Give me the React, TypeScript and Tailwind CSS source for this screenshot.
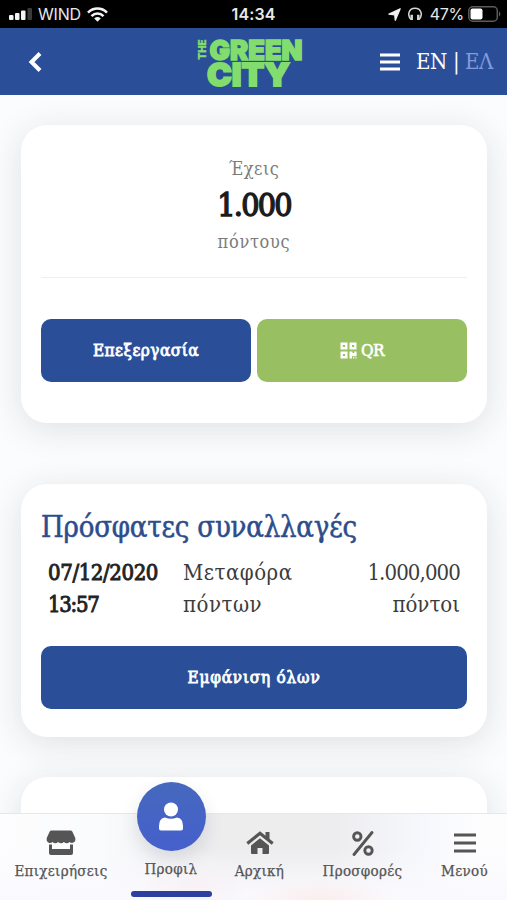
import type { ReactNode } from "react"

function StatusBar() {
  return (
    <div className="flex h-7 shrink-0 items-center bg-black font-['Inter',sans-serif] text-[#e8e8e8]">
      <div className="flex flex-1 items-center pl-[9px]">
        <svg width="23" height="12" viewBox="0 0 23 12" fill="#f4f4f4">
          <rect x="0" y="7" width="4.5" height="5" rx="1" />
          <rect x="6" y="5" width="4.5" height="7" rx="1" />
          <rect x="12" y="2.500" width="4.500" height="9.500" rx="1" />
          <rect x="18.500" y="0" width="4.500" height="12" rx="1" fill="#3a3a3a" />
        </svg>
        <span className="ml-[6px] text-[16px] tracking-[-0.2px]">WIND</span>
        <svg className="ml-[6px]" width="21" height="15" viewBox="0 0 21 15" fill="none" stroke="#f4f4f4" strokeWidth="2.6">
          <path d="M1 5.600C6.400.2 14.600.2 20 5.600" />
          <path d="M4.500 9.100C8 5.700 13 5.700 16.500 9.100" />
          <path d="M7.200 11.400C9.200 9.500 11.800 9.500 13.800 11.400L10.500 14.800Z" fill="#f4f4f4" stroke="none" />
        </svg>
      </div>
      <span className="mr-[3px] text-[16px] font-semibold tracking-[0.1px]">14:34</span>
      <div className="flex flex-1 items-center justify-end pr-[6px]">
        <svg width="13" height="13" viewBox="0 0 13 13" fill="#f0f0f0" stroke="#f0f0f0" strokeWidth="1.300" strokeLinejoin="round">
          <path d="M12.200.8L1 6.200l5.700.6.600 5.500z" />
        </svg>
        <svg className="ml-[7px]" width="14" height="14" viewBox="0 0 14 14" fill="none" stroke="#d5d5d5">
          <path d="M3 12.500C-1.200 8 .8 1.200 7 1.200S15.200 8 11 12.500" strokeWidth="1.500" />
          <path d="M3.700 7.700v5.300M10.300 7.700v5.300" strokeWidth="2.500" />
        </svg>
        <span className="ml-[8px] text-[16px] tracking-[-0.3px]">47%</span>
        <svg className="ml-[4px]" width="33" height="16" viewBox="0 0 33 16">
          <rect x="0.800" y="0.800" width="28.500" height="14.400" rx="4" fill="none" stroke="#5c5c5c" strokeWidth="1.500" />
          <rect x="2.500" y="2.500" width="12" height="11" rx="2" fill="#fff" />
          <path d="M31 5.500c1.800.8 1.800 4.200 0 5z" fill="#5c5c5c" />
        </svg>
      </div>
    </div>
  )
}

function Logo() {
  return (
    <svg
      width="108"
      height="54"
      viewBox="0 0 108 54"
      fill="#82dd6e"
      stroke="#82dd6e"
      className="overflow-visible font-['Inter',sans-serif] font-black"
    >
      <text transform="translate(8.500 23.500) rotate(-90)" fontSize="10" strokeWidth="0.3" textLength="20" lengthAdjust="spacingAndGlyphs">THE</text>
      <text x="12.500" y="23.500" fontSize="27.500" strokeWidth="1.500" textLength="93" lengthAdjust="spacingAndGlyphs">GREEN</text>
      <text x="10" y="50.200" fontSize="31" strokeWidth="1.800" textLength="83" lengthAdjust="spacingAndGlyphs">CITY</text>
    </svg>
  )
}

function Header() {
  return (
    <header className="relative flex h-[67px] shrink-0 items-center justify-between bg-[#2a4f98] pl-[28px] pr-[14px] text-white">
      <svg width="14" height="20" viewBox="0 0 14 20" fill="none" stroke="#fff" strokeWidth="4">
        <path d="M12 1.500L3.500 10l8.500 8.500" />
      </svg>
      <div className="absolute left-[197px] top-[8px]">
        <Logo />
      </div>
      <div className="flex items-center">
        <svg width="20" height="18" viewBox="0 0 20 18" fill="#fff">
          <path d="M0 .5h20v3H0zM0 7.500h20v3H0zM0 14.500h20v3H0z" />
        </svg>
        <div className="ml-[16px] text-[22px] tracking-[-0.4px] whitespace-nowrap">
          EN | <span className="text-[#8499dc]">ΕΛ</span>
        </div>
      </div>
    </header>
  )
}

function Card({ className, children }: { className: string; children?: ReactNode }) {
  return (
    <section className={`shrink-0 rounded-[26px] bg-white px-5 shadow-[0_6px_34px_rgba(35,50,45,0.13)] ${className}`}>
      {children}
    </section>
  )
}

function QrIcon() {
  return (
    <svg width="17" height="17" viewBox="0 0 17 17" fill="none" stroke="#fff" strokeWidth="2.400">
      <path d="M1.700 1.700h4.600v4.600H1.700zM10.700 1.700h4.600v4.600h-4.600zM1.700 10.700h4.600v4.600H1.700z" />
      <path d="M9.500 9.500h3v1.500h1.800V9.500h2.300v4.800h-4.600v2.300H9.500z" fill="#fff" stroke="none" />
      <path d="M13 15.800h1.300M15.400 15.800h1.200" strokeWidth="1.300" />
    </svg>
  )
}

function PointsCard() {
  return (
    <Card className="h-[298px] pt-[28px] text-center">
      <div className="h-[31px] text-[18px] leading-[31px] tracking-[0.5px] text-[#7b7b7b]">Έχεις</div>
      <div className="h-[42px] text-[32px] leading-[42px] tracking-[-1.8px] text-[#1c1c1c] [-webkit-text-stroke:1.4px_#1c1c1c]">
        1.000
      </div>
      <div className="h-[31px] text-[18px] leading-[31px] tracking-[0.7px] text-[#7b7b7b]">πόντους</div>
      <div className="mt-[20px] border-t border-[#efefef]" />
      <div className="mt-[41px] flex gap-[6px] text-white">
        <button className="h-[63px] flex-1 rounded-[10px] bg-[#2a4f98] text-[17px] tracking-[0.5px] [-webkit-text-stroke:0.8px_white]">
          Επεξεργασία
        </button>
        <button className="flex h-[63px] flex-1 items-center justify-center gap-[4px] rounded-[10px] bg-[#98bf62] text-[17px] tracking-[-0.5px]">
          <QrIcon />
          <span className="[-webkit-text-stroke:0.6px_white]">QR</span>
        </button>
      </div>
    </Card>
  )
}

function TransactionsCard() {
  return (
    <Card className="mt-[61px] h-[253px] pt-[23px]">
      <h2 className="h-[40px] whitespace-nowrap text-[29px] leading-[40px] tracking-[-0.2px] text-[#2d4c8c] [-webkit-text-stroke:0.5px_#2d4c8c]">
        Πρόσφατες συναλλαγές
      </h2>
      <div className="mt-[10px] flex px-[7px] text-[22px] leading-8 text-[#3c3c3c]">
        <div className="w-[135px] tracking-[-0.4px] text-[#222] [-webkit-text-stroke:0.9px_#222]">
          <div>07/12/2020</div>
          <div className="tracking-[-1.3px]">13:57</div>
        </div>
        <div className="flex-1 tracking-[0.5px]">
          <div>Μεταφόρα</div>
          <div>πόντων</div>
        </div>
        <div className="text-right">
          <div className="tracking-[-0.9px]">1.000,000</div>
          <div>πόντοι</div>
        </div>
      </div>
      <button className="mt-[25px] block h-[63px] w-full rounded-[10px] bg-[#2a4f98] text-[17px] tracking-[0.8px] text-white [-webkit-text-stroke:0.8px_white]">
        Εμφάνιση όλων
      </button>
    </Card>
  )
}

function StoreIcon() {
  return (
    <svg width="30" height="26" viewBox="0 0 30 26" fill="currentColor">
      <path d="M5.500.5h19q1.200 0 1.800 1l3 6.500v2.500a3.500 3.500 0 0 1-5.700 1.500 4.200 4.200 0 0 1-5.700 0 4.200 4.200 0 0 1-5.700 0 4.200 4.200 0 0 1-5.700 0A3.500 3.500 0 0 1 .7 10.500V8l3-6.500q.6-1 1.800-1z" />
      <path d="M3 14.500h3V19h18v-4.500h3V23q0 2-2 2H5q-2 0-2-2z" />
    </svg>
  )
}

function HomeIcon() {
  return (
    <svg width="28" height="24" viewBox="0 0 28 24" fill="currentColor">
      <path d="M14 7.200l9 7.300V22q0 1-1 1h-5.500v-6h-5v6H6q-1 0-1-1v-7.500z" />
      <path d="M1.300 12.500L14 2.300l12.700 10.200" fill="none" stroke="currentColor" strokeWidth="3.200" />
      <path d="M19.500 1h4v9l-4-3z" />
    </svg>
  )
}

function PercentIcon() {
  return (
    <svg width="22" height="25" viewBox="0 0 22 25" fill="none" stroke="currentColor" strokeWidth="2.900">
      <circle cx="5.300" cy="5.500" r="3.700" />
      <circle cx="16.500" cy="19.500" r="3.700" />
      <path d="M20 1.500L2 23.500" strokeLinecap="round" />
    </svg>
  )
}

const navItems = [
  { label: "Επιχειρήσεις", width: "w-[122px]", icon: <StoreIcon /> },
  { label: "Προφιλ", width: "w-[98px]", active: true, icon: null },
  { label: "Αρχική", width: "w-[79px]", icon: <HomeIcon /> },
  { label: "Προσφορές", width: "w-[127px]", icon: <PercentIcon /> },
  {
    label: "Μενού",
    width: "w-[77px]",
    icon: (
      <svg width="22" height="20" viewBox="0 0 22 20" fill="currentColor">
        <path d="M0 .5h22v3H0zM0 8.500h22v3H0zM0 16.500h22v3H0z" />
      </svg>
    ),
  },
]

function BottomNav() {
  return (
    <nav className="absolute inset-x-0 bottom-0 flex h-[87px] border-t border-[#e6e7e9] bg-[radial-gradient(ellipse_80px_24px_at_320px_87px,#fbecec,transparent),radial-gradient(ellipse_60px_36px_at_195px_75px,#f8f1f5,transparent),linear-gradient(transparent_40%,#fafafe_95%),linear-gradient(90deg,#fdfdfe_0%,#fafbfd_20%,#ededee_40%,#ededef_66%,#f7f8fd_84%,#fdfdfe_94%)] text-[#555]">
      {navItems.map((item) => (
        <div key={item.label} className={`relative flex shrink-0 flex-col items-center ${item.width}`}>
          {item.active ? (
            <>
              <div className="-mt-[32px] flex h-[69px] w-[69px] shrink-0 items-center justify-center rounded-full bg-[linear-gradient(#4668bd,#4560cc)] shadow-[0_8px_18px_rgba(40,50,80,0.13)]">
                <svg width="26" height="29" viewBox="0 0 26 29" fill="#fff">
                  <circle cx="13" cy="7.500" r="7" />
                  <path d="M7 15.500q6 2.500 12 0 6 .5 6 8.500v2.500q0 2-2 2H3q-2 0-2-2V24q0-8 6-8.500z" />
                </svg>
              </div>
              <span className="mt-[8px] h-5 whitespace-nowrap text-[15px] leading-5 tracking-[0.3px] [-webkit-text-stroke:0.25px_#555]">{item.label}</span>
              <div className="mt-[12px] h-[6px] w-[81px] rounded-full bg-[#2b409f]" />
            </>
          ) : (
            <>
              <div className="mt-[14px] flex h-[30px] items-center">{item.icon}</div>
              <span className="mt-[3px] h-5 whitespace-nowrap text-[15px] leading-5 tracking-[0.3px] [-webkit-text-stroke:0.25px_#555]">{item.label}</span>
            </>
          )}
        </div>
      ))}
    </nav>
  )
}

export default function App() {
  return (
    <div className="relative flex h-[900px] w-[507px] flex-col overflow-hidden bg-[#fafcfd] font-['Roboto_Slab','DejaVu_Serif_Condensed','DejaVu_Serif',serif] [font-stretch:condensed]">
      <StatusBar />
      <Header />
      <main className="flex flex-1 flex-col overflow-hidden pl-[21px] pr-[20px] pt-[30px]">
        <PointsCard />
        <TransactionsCard />
        <Card className="mt-[40px] h-[180px]" />
      </main>
      <BottomNav />
    </div>
  )
}
